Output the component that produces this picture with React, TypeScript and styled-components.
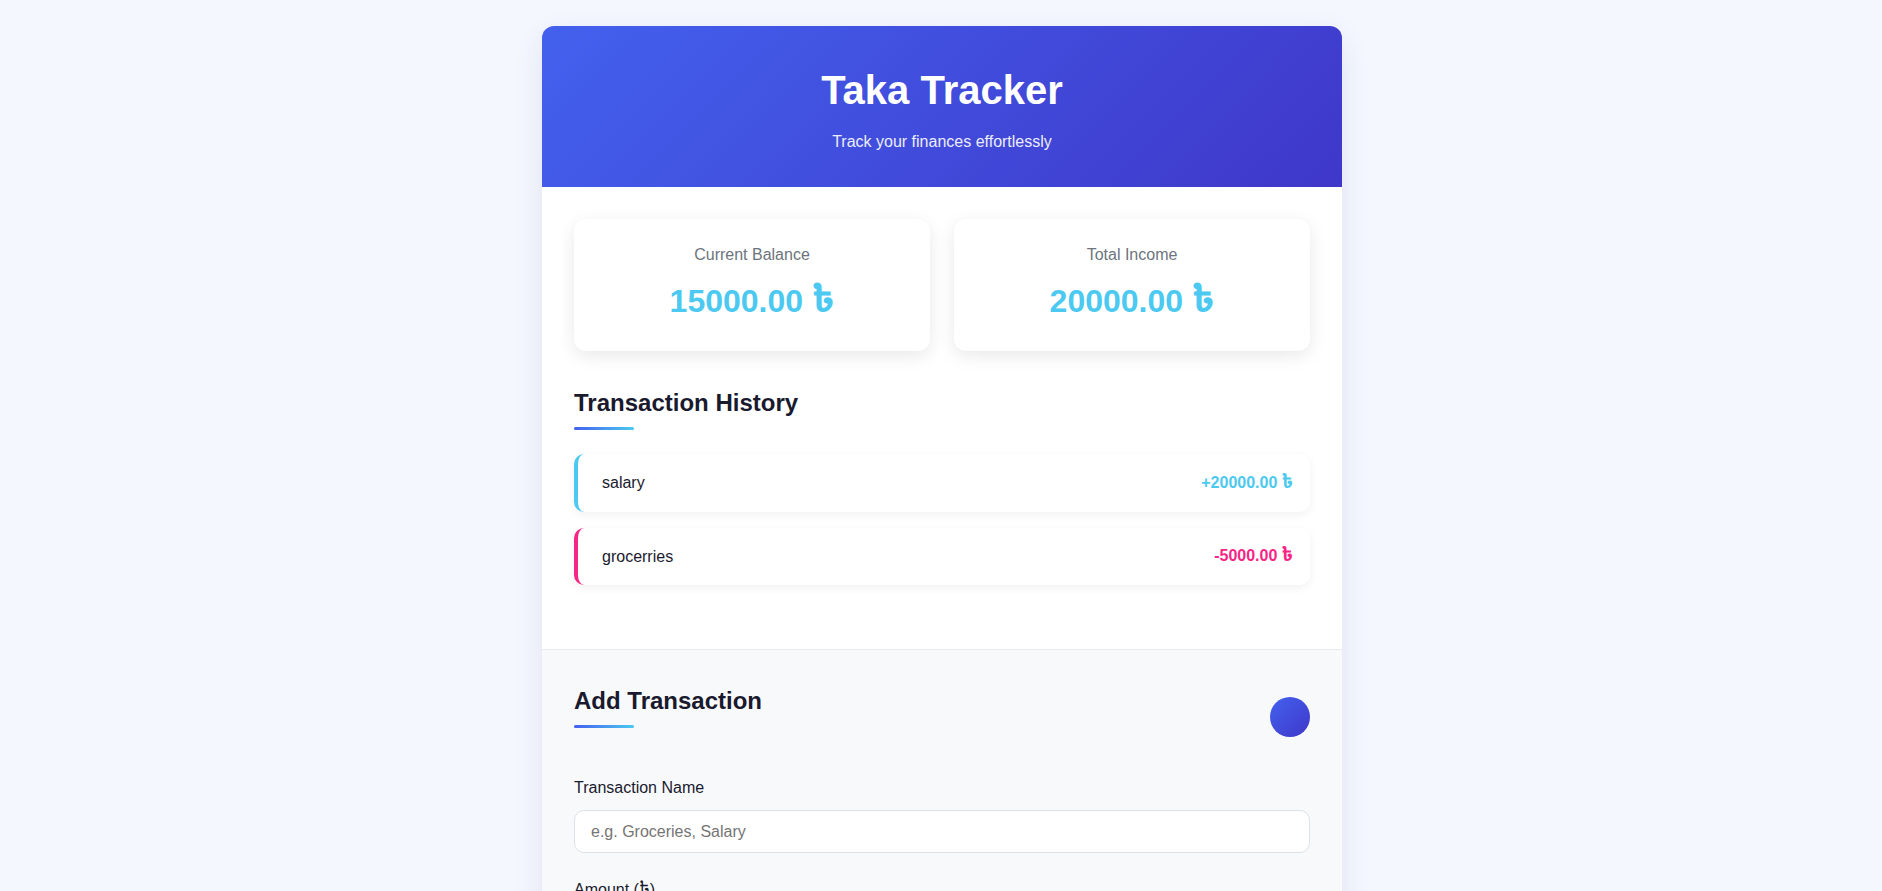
import React from "react";
import styled, { createGlobalStyle } from "styled-components";

const GlobalStyle = createGlobalStyle`
  html { scrollbar-width: none; }
  html::-webkit-scrollbar, body::-webkit-scrollbar { display: none; }
  * { box-sizing: border-box; }
  body {
    margin: 0;
    padding: 26px 19px 25px 21px;
    background: #f4f7fe;
    font-family: "Liberation Sans", Arial, sans-serif;
    color: #1a1a2e;
  }
`;

const Card = styled.div`
  max-width: 800px;
  margin: 0 auto;
  background: #ffffff;
  border-radius: 12px;
  overflow: hidden;
  box-shadow: 0 10px 30px rgba(30, 40, 120, 0.09);
`;

const Header = styled.header`
  background: linear-gradient(135deg, #4361ee 0%, #3f37c9 100%);
  color: #ffffff;
  text-align: center;
  padding: 40px 20px 36px;
`;

const Title = styled.h1`
  margin: 0;
  font-size: 40px;
  line-height: 48px;
  font-weight: 700;
`;

const Subtitle = styled.p`
  margin: 19px 0 0;
  font-size: 16px;
  line-height: 18px;
  opacity: 0.9;
`;

const Taka = styled.span`
  font-family: "Noto Sans Bengali", "Lohit Bengali", sans-serif;
  font-size: 1.15em;
`;

const Main = styled.section`
  padding: 32px 32px 32px;
`;

const Stats = styled.div`
  display: grid;
  grid-template-columns: 1fr 1fr;
  gap: 24px;
  margin-bottom: 38px;
`;

const StatCard = styled.div`
  background: #ffffff;
  border-radius: 12px;
  box-shadow: 0 5px 18px rgba(0, 0, 0, 0.09);
  text-align: center;
  padding: 27px 24px 30px;
`;

const StatLabel = styled.div`
  font-size: 16px;
  line-height: 18px;
  color: #6c757d;
`;

const StatValue = styled.div`
  margin-top: 17px;
  font-size: 32px;
  line-height: 40px;
  height: 40px;
  font-weight: 700;
  color: #4cc9f0;
`;

const HeadingBlock = styled.div`
  display: flex;
  flex-direction: column;
  align-items: flex-start;
`;

const SectionTitle = styled.h2`
  margin: 0;
  font-size: 24px;
  line-height: 28px;
  font-weight: 700;
  color: #1a1a2e;
`;

const Bar = styled.div`
  margin-top: 10px;
  width: 60px;
  height: 3px;
  border-radius: 2px;
  background: linear-gradient(90deg, #4361ee, #4cc9f0);
`;

const List = styled.ul`
  list-style: none;
  margin: 24px 0 32px;
  padding: 0;
  display: flex;
  flex-direction: column;
  gap: 16px;
`;

const Row = styled.li<{ $tone: string }>`
  display: flex;
  justify-content: space-between;
  align-items: center;
  height: 57.6px;
  background: #ffffff;
  border-left: 4px solid ${(p) => p.$tone};
  border-radius: 10px;
  box-shadow: 0 3px 10px rgba(0, 0, 0, 0.06);
  padding: 0 17px 0 24px;
  font-size: 16px;
  line-height: 19.2px;
`;

const RowName = styled.span`
  color: #1a1a2e;
`;

const RowAmount = styled.span<{ $tone: string }>`
  font-weight: 700;
  color: ${(p) => p.$tone};
`;

const FormSection = styled.section`
  background: #f8f9fa;
  border-top: 1px solid #e9ecef;
  padding: 37px 32px 32px;
`;

const FormTop = styled.div`
  display: flex;
  justify-content: space-between;
  align-items: flex-start;
  margin-bottom: 42px;
`;

const RoundButton = styled.button`
  margin-top: 10px;
  width: 40px;
  height: 40px;
  border: none;
  border-radius: 50%;
  padding: 0;
  background: linear-gradient(135deg, #4361ee, #3f37c9);
  cursor: pointer;
`;

const Field = styled.div`
  margin-bottom: 28px;
`;

const Label = styled.label`
  display: block;
  font-size: 16px;
  line-height: 18px;
  height: 18px;
  color: #1a1a2e;
  margin-bottom: 13px;
`;

const Input = styled.input`
  display: block;
  width: 100%;
  height: 43px;
  padding: 0 16px;
  border: 1px solid #dee2e6;
  border-radius: 10px;
  background: #ffffff;
  font-family: "Liberation Sans", Arial, sans-serif;
  font-size: 16px;
  color: #1a1a2e;
  outline: none;
  &::placeholder { color: #757575; }
`;

const Select = styled.select`
  display: block;
  width: 100%;
  height: 43px;
  padding: 0 16px;
  border: 1px solid #dee2e6;
  border-radius: 10px;
  background: #ffffff;
  font-family: "Liberation Sans", Arial, sans-serif;
  font-size: 16px;
`;

const Submit = styled.button`
  width: 100%;
  height: 48px;
  border: none;
  border-radius: 10px;
  background: linear-gradient(135deg, #4361ee, #3f37c9);
  color: #fff;
  font-family: "Liberation Sans", Arial, sans-serif;
  font-size: 16px;
  font-weight: 700;
`;

const T = () => <Taka lang="bn">৳</Taka>;

const transactions = [
  { name: "salary", amount: "+20000.00", tone: "#4cc9f0" },
  { name: "grocerries", amount: "-5000.00", tone: "#f72585" },
];

export default function App() {
  return (
    <>
      <GlobalStyle />
      <Card>
        <Header>
          <Title>Taka Tracker</Title>
          <Subtitle>Track your finances effortlessly</Subtitle>
        </Header>
        <Main>
          <Stats>
            <StatCard>
              <StatLabel>Current Balance</StatLabel>
              <StatValue>
                15000.00 <T />
              </StatValue>
            </StatCard>
            <StatCard>
              <StatLabel>Total Income</StatLabel>
              <StatValue>
                20000.00 <T />
              </StatValue>
            </StatCard>
          </Stats>
          <HeadingBlock>
            <SectionTitle>Transaction History</SectionTitle>
            <Bar />
          </HeadingBlock>
          <List>
            {transactions.map((t) => (
              <Row key={t.name} $tone={t.tone}>
                <RowName>{t.name}</RowName>
                <RowAmount $tone={t.tone}>
                  {t.amount} <T />
                </RowAmount>
              </Row>
            ))}
          </List>
        </Main>
        <FormSection>
          <FormTop>
            <HeadingBlock>
              <SectionTitle>Add Transaction</SectionTitle>
              <Bar />
            </HeadingBlock>
            <RoundButton aria-label="toggle" />
          </FormTop>
          <Field>
            <Label>Transaction Name</Label>
            <Input placeholder="e.g. Groceries, Salary" />
          </Field>
          <Field>
            <Label>
              Amount (<T />)
            </Label>
            <Input placeholder="Enter amount" />
          </Field>
          <Field>
            <Label>Type</Label>
            <Select defaultValue="income">
              <option value="income">Income</option>
              <option value="expense">Expense</option>
            </Select>
          </Field>
          <Submit>Add Transaction</Submit>
        </FormSection>
      </Card>
    </>
  );
}
